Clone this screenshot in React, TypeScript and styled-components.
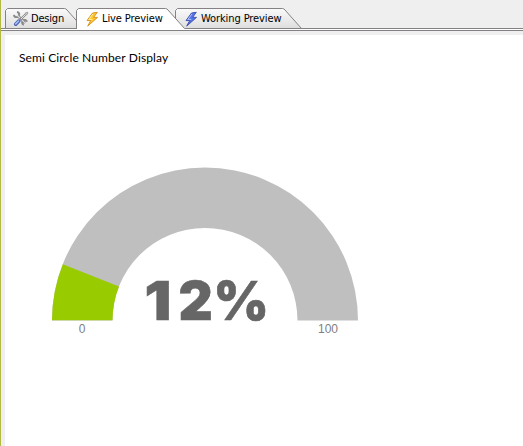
import React from "react";
import styled, { createGlobalStyle } from "styled-components";

const GlobalStyle = createGlobalStyle`
  body { margin: 0; background: #efefef; }
  * { box-sizing: border-box; }
`;

const Window = styled.div`
  width: 523px;
  height: 446px;
  overflow: hidden;
  display: flex;
  flex-direction: column;
  background: #efefef;
  border-left: 1px solid #b3b941;
`;

const TabBar = styled.div`
  display: flex;
  height: 31px;
  flex: none;
  padding: 8px 0 0 4px;
  background: linear-gradient(#848284, #848284) 0 28px / 100% 1px no-repeat,
    linear-gradient(#fff, #fff) 0 29px / 100% 1px no-repeat,
    linear-gradient(#848284, #848284) 0 30px / 100% 1px no-repeat;
`;

const Tab = styled.div<{ $width: number; $overlap: number; $active?: boolean }>`
  position: relative;
  z-index: ${(p) => (p.$active ? 2 : 1)};
  display: flex;
  align-items: center;
  flex: none;
  width: ${(p) => p.$width}px;
  height: 21px;
  margin-left: ${(p) => -p.$overlap}px;
  padding-left: 8px;
`;

const TabShape = styled.svg`
  position: absolute;
  inset: 0;
`;

const TabIcon = styled.svg`
  position: relative;
  flex: none;
  width: 16px;
  height: 16px;
`;

const TabLabel = styled.span<{ $spacing: number }>`
  position: relative;
  font: 11px/20px "DejaVu Sans Condensed", "DejaVu Sans", sans-serif;
  font-stretch: condensed;
  letter-spacing: ${(p) => p.$spacing}px;
  margin: 1px 0 0 2px;
  white-space: nowrap;
  color: #000;
`;

const Content = styled.main`
  flex: 1;
  margin: 4px 0 0 4px;
  padding: 15px 0 0 14px;
  background: #fff;
`;

const Title = styled.div`
  height: 16px;
  font: 12px/16px Lato, sans-serif;
  letter-spacing: 0.12px;
  color: #000;
  white-space: nowrap;
`;

const Gauge = styled.svg`
  display: block;
  width: 330px;
  height: 190px;
  margin: 94px 0 0 21px;
`;

const Value = styled.text`
  font: 900 53px Inter, sans-serif;
  fill: #666;
  stroke: #666;
  stroke-width: 0.6px;
`;

const Limit = styled.text`
  font: 12px "Liberation Sans", Arial, sans-serif;
  fill: #808080;
  text-anchor: middle;
`;

function ToolsIcon() {
  return (
    <TabIcon viewBox="0 0 16 16">
      <path d="M4.5 4.5L12 12" stroke="#777" strokeWidth="2.6" />
      <path d="M1 3.8A2.6 2.6 0 1 0 4 1M10.8 13.8A2.5 2.5 0 1 1 14 10.8" fill="none" stroke="#888" strokeWidth="1.9" />
      <path d="M4 4L12.4 12.4" stroke="#dedede" strokeWidth="1.2" />
      <path d="M7.5 8.5L13 3" stroke="#858585" strokeWidth="2.2" />
      <path d="M8 8L13.2 2.8" stroke="#eee" strokeWidth="0.9" />
      <path d="M12 2.3L14.2 1L15 2L13.6 4.1Z" fill="#ccc" stroke="#888" strokeWidth="0.7" />
      <path d="M2.7 13.2L5.8 10.1" stroke="#4860b0" strokeWidth="3.6" strokeLinecap="round" />
      <path d="M2.7 12.9L5.6 10" stroke="#a3bff8" strokeWidth="1.6" strokeLinecap="round" />
    </TabIcon>
  );
}

function BoltIcon({ fill, edge, shine }: { fill: string; edge: string; shine: string }) {
  return (
    <TabIcon viewBox="-.5 -.5 16 16">
      <path d="M8 1.5L12.8 .8L9.2 5.8L13 5.9L3.2 14.6L6.2 9L2.5 9.1Z" fill={fill} stroke={edge} strokeWidth="0.9" strokeLinejoin="round" />
      <path d="M8.5 2.4L4.3 8L7.8 7.8" fill="none" stroke={shine} strokeWidth="1" />
    </TabIcon>
  );
}

type TabItemProps = {
  label: string;
  width: number;
  overlap: number;
  spacing: number;
  active?: boolean;
  icon: React.ReactNode;
};

function TabItem({ label, width, overlap, spacing, active, icon }: TabItemProps) {
  const slope = width - 20;
  const outline = `M.5 ${active ? 21 : 20.5}V2.5L2.5 .5H${slope + 0.5}Q${slope + 2} .5 ${slope + 3} 2L${width - 0.5} 20.5`;
  return (
    <Tab $width={width} $overlap={overlap} $active={active}>
      <TabShape width={width} height="21">
        <defs>
          <linearGradient id="tabFace" x2="0" y2="1">
            <stop stopColor="#fafafa" />
            <stop offset="1" stopColor="#dedede" />
          </linearGradient>
        </defs>
        <path d={`${outline}${active ? "V21H.5" : "H.5"}Z`} fill={active ? "#fff" : "url(#tabFace)"} />
        <path d={outline} fill="none" stroke="#848284" />
        {!active && <path d={`M0 20.5H${width}`} stroke="#848284" />}
      </TabShape>
      {icon}
      <TabLabel $spacing={spacing}>{label}</TabLabel>
    </Tab>
  );
}

export default function App() {
  return (
    <Window>
      <GlobalStyle />
      <TabBar>
        <TabItem label="Design" width={79} overlap={0} spacing={-0.2} icon={<ToolsIcon />} />
        <TabItem label="Live Preview" width={109} overlap={8} spacing={-0.1} active icon={<BoltIcon fill="#ffc629" edge="#d2901d" shine="#fff1a3" />} />
        <TabItem label="Working Preview" width={127} overlap={10} spacing={-0.1} icon={<BoltIcon fill="#5574e9" edge="#3b4cac" shine="#b2c3ff" />} />
      </TabBar>
      <Content>
        <Title>Semi Circle Number Display</Title>
        <Gauge viewBox="40 160 330 190">
          <path d="M52 320.5A153 153 0 0 1 358 320.5H297.5A92.5 92.5 0 0 0 112.5 320.5Z" fill="#bfbfbf" />
          <path d="M52 320.2A153 153 0 0 1 62.8 264.2L119 286.4A92.5 92.5 0 0 0 112.5 320.2Z" fill="#9c0" />
          <Value transform="translate(144.5 320) scale(1.12 1)">1</Value>
          <Value x="178.5 213.5" y="320">2%</Value>
          <Limit x="82" y="333">0</Limit>
          <Limit x="328" y="333">100</Limit>
        </Gauge>
      </Content>
    </Window>
  );
}
